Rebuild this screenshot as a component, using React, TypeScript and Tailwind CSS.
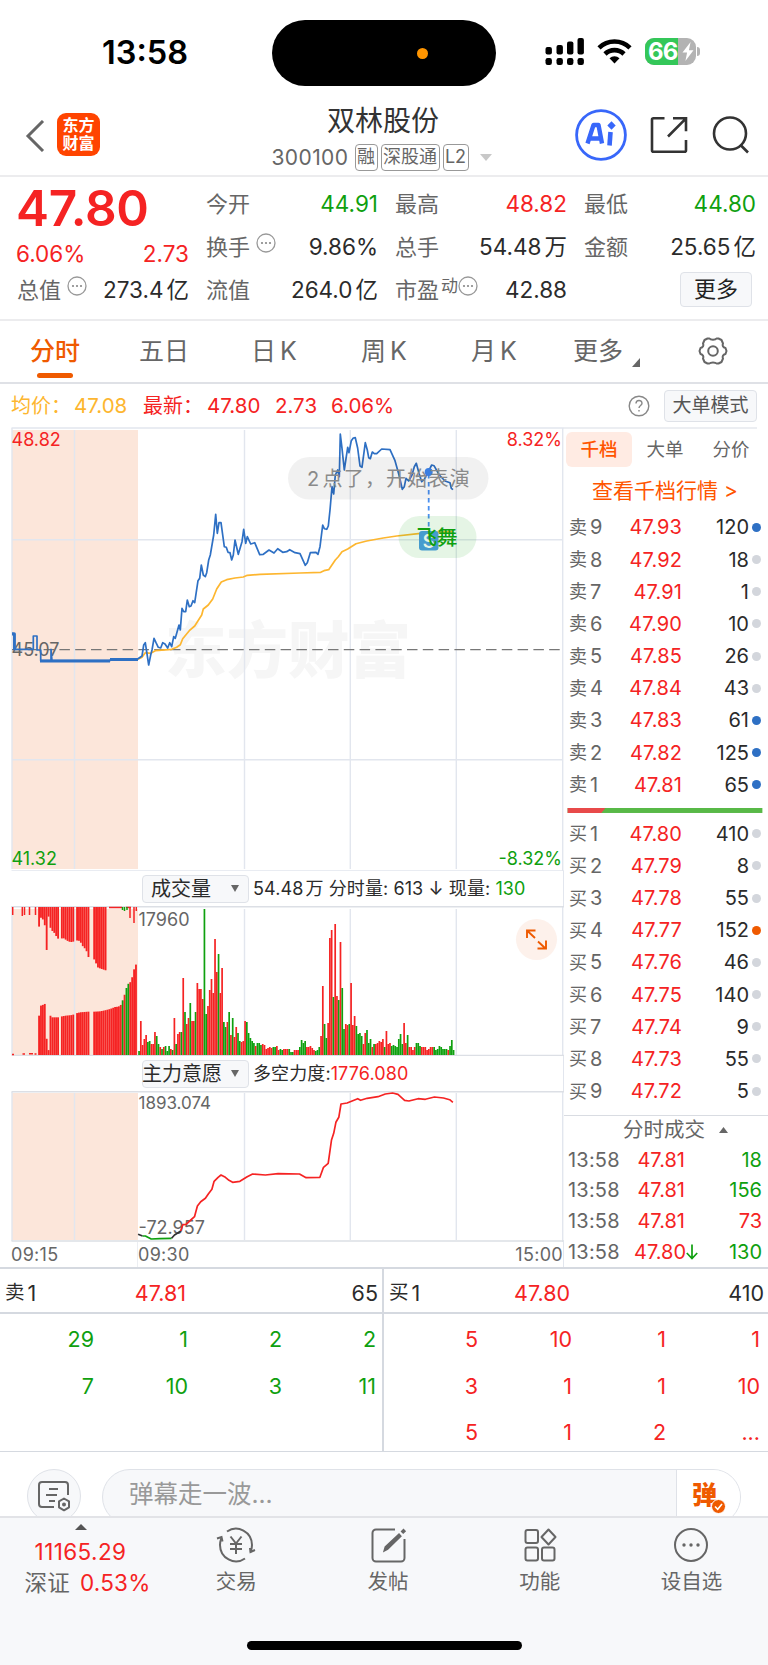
import type { ReactNode } from "react";
import clsx from "clsx";

type Point = [number, number];
type Tone = "red" | "green" | "dark";

const toneClass: Record<Tone, string> = {
  red: "text-[#f52323]",
  green: "text-[#0fa00f]",
  dark: "text-[#2b2b2b]",
};

// builds a polyline string from points plotted at 3x
const plot = (pts: Point[], ox: number, oy: number, sx = 3) =>
  pts.map(([x, y]) => `${(ox + x / sx).toFixed(1)},${(oy + y / 3).toFixed(1)}`).join(" ");

const priceMorning: Point[] = [
  [36, 640], [42, 640], [42, 688], [100, 688], [100, 648], [111, 648], [111, 690], [122, 690], [122, 722],
  [153, 722], [153, 688], [156, 722], [330, 722], [332, 718], [400, 718], [414, 716], [426, 708], [431, 675],
  [436, 668], [446, 735], [452, 705], [456, 690], [462, 655], [468, 668], [475, 682], [482, 684], [488, 668],
  [495, 672], [503, 684], [509, 668], [515, 680], [521, 650], [526, 655], [537, 615], [541, 630], [546, 565],
  [551, 575], [557, 575], [562, 540], [568, 560], [573, 558], [579, 542], [584, 548], [594, 482], [599, 475],
  [604, 435], [610, 465], [616, 470], [620, 458], [626, 420], [631, 405], [641, 345], [647, 283], [652, 340],
  [657, 308], [663, 308], [673, 380], [679, 382], [684, 397], [690, 398], [695, 420], [700, 405], [705, 360],
  [715, 403], [726, 365], [731, 328], [737, 370], [742, 350], [752, 372], [764, 368], [779, 404], [790, 403],
  [807, 390], [822, 399], [833, 386], [848, 397], [860, 395], [869, 389], [885, 398], [900, 401],
];

const priceAfternoon: Point[] = [
  [106, 436], [112, 428], [121, 398], [138, 397], [144, 403], [150, 380], [158, 315], [163, 326], [170, 328],
  [175, 318], [180, 270], [186, 200], [191, 222], [196, 165], [203, 150], [208, 170], [211, 42], [216, 85],
  [223, 150], [233, 82], [237, 98], [244, 62], [250, 54], [256, 53], [263, 85], [270, 138], [276, 142],
  [286, 68], [292, 90], [296, 113], [301, 116], [307, 96], [313, 101], [320, 101], [335, 87], [360, 89],
  [375, 122], [387, 165], [397, 208], [403, 200], [408, 175], [416, 183], [426, 165], [433, 140], [439, 130],
  [447, 160], [455, 185], [463, 178], [475, 155], [485, 135], [492, 137], [508, 165], [525, 183], [540, 188],
  [544, 205], [549, 209],
];

const avgMorning: Point[] = [
  [414, 718], [426, 712], [436, 698], [452, 700], [466, 692], [515, 688], [530, 682], [541, 674], [548, 656],
  [568, 632], [584, 618], [605, 585], [610, 567], [625, 555], [638, 537], [650, 507], [664, 486], [680, 479],
  [705, 474], [730, 471], [742, 466], [780, 463], [900, 459],
];

const avgAfternoon: Point[] = [
  [152, 457], [162, 452], [176, 449], [196, 420], [205, 410], [216, 395], [233, 387], [258, 371], [290, 363],
  [340, 354], [380, 348], [445, 341], [480, 338], [549, 335],
];

const force: Point[] = [
  [497, 513], [503, 494], [512, 493], [525, 480], [535, 470], [543, 438], [552, 425], [565, 415], [573, 402],
  [583, 388], [589, 364], [600, 352], [608, 345], [620, 352], [630, 361], [640, 367], [660, 364], [680, 350],
  [695, 342], [730, 345], [765, 341], [824, 342], [842, 353], [880, 352], [890, 322], [903, 310], [912, 240],
  [918, 220], [924, 187], [932, 172], [938, 132], [955, 129], [984, 116], [992, 121], [1010, 115], [1040, 110],
  [1060, 102], [1080, 99], [1095, 103], [1113, 121], [1125, 123], [1150, 116], [1170, 118], [1195, 111],
  [1220, 114], [1237, 119], [1246, 127],
];

// one entry per minute, "g" marks a falling minute
const volumes = (
  "4g 34 10 16 20 13g 14g 11 11 23 19g 11g 8 6g 8 9g 4g 9g 6 5g 37 11g 21 23 23g 77 43g 31 37 52g 34 34 43g 72 66 66 56 146g 41g 49 " +
  "65 76 62 116 83 101g 62 87 33g 28g 33 43g 20 37g 18 28 22g 14g 13 14 34 33g 22g 17g 14g 12g 9 12g 12g 10g 11 10 6 7 8 7 8g 8g 9 5 " +
  "6g 5g 6 6 6 6g 3g 3g 5 5 5 8g 15g 12g 14g 8 8 9 7 5 4g 5g 8g 19 69 31g 17g 32 117 125 58g 131 59 55g 113 67g 26g 31 30 " +
  "31g 72 30 39 29g 21g 22g 19g 11 22 25g 12g 16g 8 11g 11 12 14 13 16 8g 24 11 12 9g 10g 9g 8g 16g 21g 11g 32 12 20g 8 8 5 8 " +
  "12g 12g 9g 8 8 8 5 6 8 8 8g 5g 6g 9g 8g 6g 6g 6g 5 9g 15g 5g"
).split(" ");

const auctionTop: Point[] = [
  [116, 66], [121, 30], [127, 38], [133, 35], [139, 143], [146, 20], [150, 60], [155, 70], [160, 75], [165, 80],
  [172, 95], [191, 94], [203, 102], [210, 105], [217, 105], [228, 100], [240, 102], [246, 115], [252, 122],
  [258, 128], [265, 150], [284, 158], [289, 172], [294, 182], [302, 185], [317, 190], [322, 207],
];

const auctionBottom: Point[] = [
  [116, 112], [122, 148], [128, 150], [134, 155], [140, 45], [146, 12], [151, 118], [156, 113], [176, 113],
  [186, 116], [197, 118], [217, 120], [228, 125], [240, 128], [265, 130], [284, 130], [300, 131], [315, 134],
  [330, 138], [345, 144], [355, 145], [362, 150], [367, 162], [372, 175], [378, 198], [384, 213], [390, 217],
  [396, 232], [402, 257], [408, 272],
];

const heightAt = (pts: Point[], x: number) => {
  const i = pts.findIndex(([px]) => px >= x);
  if (i === -1) return 0;
  if (i === 0 || pts[i][0] === x) return pts[i][1];
  const [x0, y0] = pts[i - 1];
  const [x1, y1] = pts[i];
  return y0 + ((y1 - y0) * (x - x0)) / (x1 - x0);
};

const auctionX = Array.from({ length: 52 }, (_, i) => 117 + i * 5.7).filter(
  (x) => !(x > 178 && x < 184) && !(x > 220 && x < 226) && !(x > 267 && x < 281)
);

const sells = [
  ["9", "47.93", "120", "bg-[#2e70c4]"],
  ["8", "47.92", "18", "bg-[#d3d6dc]"],
  ["7", "47.91", "1", "bg-[#d3d6dc]"],
  ["6", "47.90", "10", "bg-[#d3d6dc]"],
  ["5", "47.85", "26", "bg-[#d3d6dc]"],
  ["4", "47.84", "43", "bg-[#d3d6dc]"],
  ["3", "47.83", "61", "bg-[#2e70c4]"],
  ["2", "47.82", "125", "bg-[#2e70c4]"],
  ["1", "47.81", "65", "bg-[#2e70c4]"],
];

const buys = [
  ["1", "47.80", "410", "bg-[#d3d6dc]"],
  ["2", "47.79", "8", "bg-[#d3d6dc]"],
  ["3", "47.78", "55", "bg-[#d3d6dc]"],
  ["4", "47.77", "152", "bg-[#ef5a00]"],
  ["5", "47.76", "46", "bg-[#d3d6dc]"],
  ["6", "47.75", "140", "bg-[#d3d6dc]"],
  ["7", "47.74", "9", "bg-[#d3d6dc]"],
  ["8", "47.73", "55", "bg-[#d3d6dc]"],
  ["9", "47.72", "5", "bg-[#d3d6dc]"],
];

const trades: { price: string; qty: string; tone: Tone; down?: boolean }[] = [
  { price: "47.81", qty: "18", tone: "green" },
  { price: "47.81", qty: "156", tone: "green" },
  { price: "47.81", qty: "73", tone: "red" },
  { price: "47.80", qty: "130", tone: "green", down: true },
];

const MoreDots = () => (
  <svg className="w-5 h-5 shrink-0" viewBox="0 0 20 20" fill="none">
    <circle cx="10" cy="10" r="9" stroke="#999" strokeWidth="1.3" />
    <g fill="#888">
      <circle cx="6" cy="10" r="1.1" />
      <circle cx="10" cy="10" r="1.1" />
      <circle cx="14" cy="10" r="1.1" />
    </g>
  </svg>
);

function StatusBar() {
  return (
    <div className="h-[101px] flex relative">
      <div className="ml-[102px] mt-[33px] w-[170px] text-[32.5px] leading-[40px] font-semibold text-black">
        13:58
      </div>
      <div className="mt-5 w-56 h-[66px] rounded-full bg-black flex items-center">
        <span className="ml-[145px] size-[11px] rounded-full bg-[#ff9500]" />
      </div>
      <svg className="ml-[49px] mt-[38px] w-10 h-7" viewBox="0 0 40 28">
        <rect x="0.5" y="9" width="6.4" height="7.5" rx="2" />
        <rect x="11.5" y="7" width="6.4" height="9.5" rx="2" />
        <rect x="22" y="3.5" width="6.4" height="13" rx="2" />
        <rect x="32.5" y="0" width="6.4" height="16.5" rx="2" />
        <rect x="0.5" y="20" width="6.4" height="7" rx="2.2" />
        <rect x="11.5" y="20" width="6.4" height="7" rx="2.2" />
        <rect x="22" y="20" width="6.4" height="7" rx="2.2" />
        <rect x="32.5" y="20" width="6.4" height="7" rx="2.2" />
      </svg>
      <svg className="ml-3 mt-[38px] w-[35px] h-[26px]" viewBox="0 0 35 26" fill="none" stroke="#000" strokeWidth="4.6">
        <path d="M2 9.8a22.3 22.3 0 0 1 31 0" />
        <path d="M8 16a13.6 13.6 0 0 1 19 0" />
        <path d="M17.5 25.5l-5-5.2a7.2 7.2 0 0 1 10 0z" fill="#000" stroke="none" />
      </svg>
      <div className="ml-[13px] mt-[38px] flex items-center h-[27px]">
        <div className="relative w-[51px] h-[27px] rounded-[9px] overflow-hidden bg-[#b3b3b3]">
          <div className="w-[33px] h-full bg-[#34c759]" />
          <span className="absolute left-[3px] top-0 text-[24px] leading-[27px] font-bold text-white tracking-[-0.8px]">66</span>
          <svg className="absolute right-[2px] top-[4px] w-3 h-[19px]" viewBox="0 0 12 19" fill="#fff">
            <path d="M8.6 0L0.5 10.6h4.6L3.4 19l8.1-10.7H6.9z" />
          </svg>
        </div>
        <div className="ml-px w-[3px] h-[9px] rounded-r-full bg-[#b3b3b3]" />
      </div>
    </div>
  );
}

function Header() {
  return (
    <header className="h-[76px] flex border-b-2 border-[#ececee]">
      <svg className="ml-[25px] mt-[19px] w-5 h-8" viewBox="0 0 20 32" fill="none" stroke="#666" strokeWidth="3">
        <path d="M18 1L3 16l15 15" />
      </svg>
      <div className="ml-3 mt-[12px] w-[43px] h-[43px] rounded-[9px] bg-[#ff4400] text-white font-semibold text-[16px] leading-[18px] text-center pt-[3px]">
        <div>东方</div>
        <div>财富</div>
      </div>
      <div className="ml-[150px] w-[266px] flex flex-col items-center">
        <h1 className="text-[28px] leading-[40px] text-[#333]">双林股份</h1>
        <div className="flex items-center h-7 mt-[3px] -ml-[3px] text-[#666]">
          <span className="text-[21px] leading-7 w-[83px] tracking-[0.4px]">300100</span>
          <span className="border-[1.5px] border-[#999] rounded-[4px] h-[27px] w-[23px] text-center text-[18px] leading-[24px]">融</span>
          <span className="ml-[3px] border-[1.5px] border-[#999] rounded-[4px] h-[27px] w-[59px] text-center text-[18px] leading-[24px]">深股通</span>
          <span className="ml-[3px] border-[1.5px] border-[#999] rounded-[4px] h-[27px] w-[26px] text-center text-[18px] leading-[24px]">L2</span>
          <svg className="ml-[11px] w-3 h-[7px]" viewBox="0 0 12 7" fill="#c8c8c8">
            <path d="M0 0h12L6 7z" />
          </svg>
        </div>
      </div>
      <div className="ml-[59px] flex">
        <svg className="mt-[8px] w-[52px] h-[52px] shrink-0" viewBox="0 0 52 52" fill="none">
          <circle cx="26" cy="26" r="24.4" stroke="#3867fa" strokeWidth="2.8" />
          <path d="M12.5 34.5l6-18.5h5l3.5 18.5M14.5 29.5h11" stroke="#3867fa" strokeWidth="4.4" strokeLinejoin="round" />
          <path d="M35.5 23l-1 13.5" stroke="#3867fa" strokeWidth="4.6" />
          <path d="M36.5 12.3l4.2 4.2-4.2 4.2-4.2-4.2z" fill="#3867fa" />
        </svg>
        <svg className="ml-[23px] mt-[15px] w-[38px] h-[38px] shrink-0" viewBox="0 0 38 38" fill="none" stroke="#333" strokeWidth="2.6">
          <path d="M14.500 2.300H3.500a1.500 1.500 0 0 0-1.500 1.500v30.500a1.500 1.500 0 0 0 1.500 1.500h31a1.500 1.500 0 0 0 1.500-1.500V24" />
          <path d="M23 2.300h13v13M36 2.300L18 20.500" />
        </svg>
        <svg className="ml-[23px] mt-[14px] w-10 h-10 shrink-0" viewBox="0 0 40 40" fill="none" stroke="#333" strokeWidth="2.6">
          <circle cx="19" cy="18.500" r="16" />
          <path d="M29.500 30l7.500 7.500" />
        </svg>
      </div>
    </header>
  );
}

function Quote({ label, value, unit, tone = "dark", extra }: { label: string; value: string; unit?: string; tone?: Tone; extra?: ReactNode }) {
  return (
    <div className="flex items-center justify-between h-[43px]">
      <span className="flex items-center text-[22px] leading-[30px] text-[#666]">
        {label}
        {extra}
      </span>
      <span className={clsx("text-[22.5px] leading-[30px] flex", toneClass[tone])}>
        {value}
        {unit && <span className="ml-[3px]">{unit}</span>}
      </span>
    </div>
  );
}

function QuotePanel() {
  return (
    <section className="h-[145px] flex gap-[17px] pl-[17px] pr-3 border-b-2 border-[#ececee]">
      <div className="w-[172px]">
        <div className="text-[49.5px] leading-[60px] font-semibold tracking-[-0.3px] text-[#f52323] mt-[1px] -ml-px">47.80</div>
        <div className="mt-px flex justify-between text-[22.5px] leading-[30px] text-[#f52323]">
          <span className="-ml-px">6.06%</span>
          <span>2.73</span>
        </div>
        <Quote label="总值" value="273.4" unit="亿" extra={<span className="ml-[6px] -mt-2"><MoreDots /></span>} />
      </div>
      <div className="w-[172px] mt-[6px]">
        <Quote label="今开" value="44.91" tone="green" />
        <Quote label="换手" value="9.86%" extra={<span className="ml-[6px] -mt-2"><MoreDots /></span>} />
        <Quote label="流值" value="264.0" unit="亿" />
      </div>
      <div className="w-[172px] mt-[6px]">
        <Quote label="最高" value="48.82" tone="red" />
        <Quote label="总手" value="54.48" unit="万" />
        <Quote
          label="市盈"
          value="42.88"
          extra={
            <span className="flex items-center -mt-2">
              <span className="text-[17px] leading-5 ml-[2px]">动</span>
              <MoreDots />
            </span>
          }
        />
      </div>
      <div className="w-[172px] mt-[6px]">
        <Quote label="最低" value="44.80" tone="green" />
        <Quote label="金额" value="25.65" unit="亿" />
        <button className="block ml-auto mr-1 mt-[3px] w-[72px] h-[35px] rounded-[4px] border-[1.5px] border-[#dfe2e8] bg-[#f7f8fa] text-[22px] leading-[31px] text-[#222]">
          更多
        </button>
      </div>
    </section>
  );
}

function Tabs() {
  const tabs = [
    { name: "五日", width: "w-[110px]" },
    { name: "日K", width: "w-[110px]" },
    { name: "周K", width: "w-[110px]" },
    { name: "月K", width: "w-[110px]" },
  ];
  return (
    <nav className="h-[63px] flex text-[25px] leading-[61px] text-[#666] border-b-2 border-[#dfe1e6]">
      <div className="w-[110px] flex flex-col items-center text-[#ef5a00] font-medium">
        <span className="h-[52px]">分时</span>
        <span className="w-9 h-[5px] rounded-full bg-[#ef5a00]" />
      </div>
      {tabs.map((t) => (
        <div key={t.name} className={clsx("text-center -ml-px mr-px", t.width)}>
          {t.name.charAt(0)}
          <span className={t.name.endsWith("K") ? "ml-1" : ""}>{t.name.charAt(1)}</span>
        </div>
      ))}
      <div className="w-[110px] pl-[23px] flex">
        更多
        <svg className="ml-[9px] mt-[37px] w-2 h-[9px]" viewBox="0 0 8 9" fill="#666">
          <path d="M8 0v9H0z" />
        </svg>
      </div>
      <svg className="ml-[38px] mt-[16px] w-[30px] h-[28px]" viewBox="0 0 30 28" fill="none" stroke="#666" strokeWidth="2">
        <path
          d="M9.500 1.500h2c1 1.500 6 1.500 7 0h2l3 1.500 1.500 3.500c-1 2 0 4 2.500 4.500l1 3-1 3c-2.500.5-3.500 2.500-2.500 4.500L23.500 25l-3 1.500h-2c-1-1.500-6-1.500-7 0h-2l-3-1.500L5 21.500c1-2 0-4-2.500-4.500l-1-3 1-3C5 10.500 6 8.500 5 6.500L6.500 3z"
          strokeLinejoin="round"
        />
        <circle cx="15" cy="14" r="4.800" />
      </svg>
    </nav>
  );
}

function InfoRow() {
  return (
    <div className="h-[43px] flex items-center pl-[11px] pr-[11px] text-[20.5px] text-[#f52323]">
      <span className="text-[#fdb62f] w-[63px] whitespace-nowrap text-[20px]">均价：</span>
      <span className="text-[#fdb62f] w-[69px]">47.08</span>
      <span className="w-[64px] whitespace-nowrap text-[20px]">最新：</span>
      <span className="w-[68px]">47.80</span>
      <span className="w-[56px]">2.73</span>
      <span>6.06%</span>
      <svg className="ml-auto w-[22px] h-[22px]" viewBox="0 0 22 22" fill="none" stroke="#888" strokeWidth="1.4">
        <circle cx="11" cy="11" r="9.800" />
        <path d="M8 8.500c0-4 6-4 6-.3 0 2.300-3 2.300-3 4.800M11 15v1.600" />
      </svg>
      <button className="ml-[14px] w-[93px] h-8 rounded-[4px] border-[1.5px] border-[#dfe2e8] bg-[#f7f8fa] text-[19px] leading-[28px] text-[#555]">
        大单模式
      </button>
    </div>
  );
}

function PriceChart() {
  return (
    <svg className="block w-[564px] h-[444px]" viewBox="0 427 564 444">
      <rect x="12" y="430" width="126" height="439" fill="#fce6da" />
      <text x="165" y="673" fontSize="61.500" fontWeight="900" fill="#f6f6f6">东方财富</text>
      <g stroke="#e2e6ee" strokeWidth="1.4">
        <path d="M11.500 428H564M11.500 871H564" />
        <path d="M12 428V869M74.500 430V869M244.500 430V869M350.300 430V869M456.300 430V869M562.700 428V871" />
        <path d="M12 539.700H563M12 759.700H563" />
      </g>
      <path d="M12 649.700H563" stroke="#777" strokeWidth="1.300" strokeDasharray="10.500 5.300" />
      <g fontSize="18">
        <text x="11.500" y="446" fill="#f52323">48.82</text>
        <text x="562" y="446" textAnchor="end" fill="#f52323">8.32%</text>
        <text x="11.500" y="865" fill="#0fa00f">41.32</text>
        <text x="562" y="865" textAnchor="end" fill="#0fa00f">-8.32%</text>
        <text x="11.500" y="655.500" fill="#666">45.07</text>
      </g>
      <g fill="none" strokeLinejoin="round">
        <polyline points={`${plot(avgMorning, 0, 420)} ${plot(avgAfternoon, 270, 420)}`} stroke="#fdb62f" strokeWidth="1.700" />
        <polyline points={`${plot(priceMorning, 0, 420)} ${plot(priceAfternoon, 270, 420)}`} stroke="#2e70c4" strokeWidth="1.700" />
        <path d="M12 634h2.500v16M40 661H110M110 659.500H138" stroke="#2e70c4" strokeWidth="2.800" />
      </g>
      {/* trade marker */}
      <path d="M428.700 474V530" stroke="#4a90f0" strokeWidth="1.800" strokeDasharray="4.500 3.500" />
      <circle cx="428.700" cy="472" r="4" fill="#3f86ee" />
      <rect x="419" y="531" width="19.500" height="19.500" rx="3" fill="#4d9be6" />
      <text x="428.700" y="547.500" textAnchor="middle" fontSize="18" fontWeight="600" fill="#fff">S</text>
      {/* floating comments */}
      <rect x="288" y="457" width="200.500" height="42.500" rx="21.250" fill="#000" fillOpacity="0.055" />
      <text x="307" y="486" fontSize="20" fill="#8a8a8a">2</text>
      <text x="322.500" y="486" fontSize="20" fill="#8a8a8a" letterSpacing="1.200">点了，开始表演</text>
      <rect x="398.500" y="516" width="78" height="42" rx="21" fill="#0fa00f" fillOpacity="0.11" />
      <text x="416.500" y="545" fontSize="20.500" fontWeight="500" fill="#0fa00f">飞舞</text>
    </svg>
  );
}

function VolumeChart() {
  return (
    <svg className="block w-[564px] h-[150px]" viewBox="0 906 564 150">
      <rect x="12" y="909" width="126" height="146" fill="#fce6da" />
      <g stroke="#e2e6ee" strokeWidth="1.400">
        <path d="M12 906V1055M74.500 909V1055M244.500 909V1055M350.300 909V1055M456.300 909V1055M562.700 906V1056" />
        <path d="M11.500 906.700H564M11.500 1055.500H564" stroke="#dcdfe5" />
      </g>
      {auctionX.map((x) => {
        const top = x < 325 ? heightAt(auctionTop, x) / 3 : 0;
        const green = (x > 364 && x < 370) || (x > 375 && x < 388);
        return (
          <g key={x} fill={green ? "#0fa00f" : "#f52323"}>
            <rect x={x / 3 - 0.85} y="907" width="1.850" height={top} />
            <rect x={x / 3 - 0.85} y={1055 - heightAt(auctionBottom, x) / 3} width="1.850" height={heightAt(auctionBottom, x) / 3} />
          </g>
        );
      })}
      <g stroke="#f52323" strokeWidth="1.500">
        <path d="M12.700 907v8M22.300 907v9M24.500 907v8M29.500 907v8M35.500 907v8M130 907v11M134 907v16M136.300 907v4" />
        <path d="M109 907.500h13M126 907.500h5" />
        <path d="M12 1054.500h2M22.500 1054h2.500M29 1053.800h4M34.500 1054h2" />
        <path d="M122.500 907v3M124.500 907v4M127 907v3" stroke="#0fa00f" />
      </g>
      {volumes.map((v, i) => {
        const h = parseInt(v, 10);
        return (
          <rect key={i} x={138.200 + i * 1.767} y={1055 - h} width="1.700" height={h} fill={v.endsWith("g") ? "#0fa00f" : "#f52323"} />
        );
      })}
      <text x="138.500" y="926" fontSize="18" fill="#666">17960</text>
      <circle cx="536.500" cy="939.500" r="20.500" fill="#fdf1eb" />
      <g fill="none" stroke="#ef5a00" strokeWidth="1.900">
        <path d="M527 938V930.500h8.500M527.500 931l7.500 7M538 941.500l7.500 7M546 940.500V948.500h-8.500" />
      </g>
    </svg>
  );
}

function ForceChart() {
  return (
    <svg className="block w-[564px] h-[151px]" viewBox="0 1091 564 151">
      <rect x="12" y="1093" width="126" height="147" fill="#fce6da" />
      <g stroke="#e2e6ee" strokeWidth="1.400">
        <path d="M12 1092V1241M74.500 1093V1240M244.500 1093V1240M350.300 1093V1240M456.300 1093V1240M562.700 1091V1242" />
        <path d="M11.500 1091.700H564M11.500 1241H564" stroke="#dcdfe5" />
      </g>
      <text x="138.500" y="1109" fontSize="17" fill="#666">1893.074</text>
      <text x="138.500" y="1234" fontSize="18" fill="#666">-72.957</text>
      <g fill="none" strokeLinejoin="round" strokeWidth="1.700">
        <polyline points={plot([[380, 523], [392, 528]], 0, 1060, 2.751)} stroke="#333" />
        <polyline points={plot([[392, 528], [400, 528], [416, 537], [440, 536], [472, 535]], 0, 1060, 2.751)} stroke="#0fa00f" />
        <polyline points={plot([[472, 535], [480, 525], [490, 518], [497, 513]], 0, 1060, 2.751)} stroke="#333" />
        <polyline points={plot(force, 0, 1060, 2.751)} stroke="#f52323" />
      </g>
    </svg>
  );
}

function IndicatorSelect({ name }: { name: string }) {
  return (
    <button className="ml-[142px] w-[107px] h-[28px] shrink-0 flex items-center justify-between rounded-[4px] border-[1.5px] border-[#dfe2e8] bg-[#f7f8fa] text-[20px] leading-6 text-[#2b2b2b]">
      <span className={name.length === 4 ? "-ml-px" : "ml-2"}>{name}</span>
      <svg className="mr-[9px] w-2 h-[7px]" viewBox="0 0 8 7" fill="#666">
        <path d="M0 0h8L4 7z" />
      </svg>
    </button>
  );
}

function Charts() {
  return (
    <div className="w-[564px] flex flex-col">
      <PriceChart />
      <div className="h-[35px] flex items-center text-[18px] text-[#2b2b2b] border-r-[1.5px] border-[#e2e6ee]">
        <IndicatorSelect name="成交量" />
        <span className="ml-1 whitespace-nowrap tracking-[0.1px]">
          54.48<span className="ml-[2px]">万</span> 分时量: 613 ↓ 现量: <span className="text-[#0fa00f]">130</span>
        </span>
      </div>
      <VolumeChart />
      <div className="h-[35px] flex items-center text-[18px] text-[#2b2b2b] border-r-[1.5px] border-[#e2e6ee]">
        <IndicatorSelect name="主力意愿" />
        <span className="ml-1 whitespace-nowrap tracking-[0.1px]">
          多空力度:<span className="text-[#f52323]">1776.080</span>
        </span>
      </div>
      <ForceChart />
      <div className="h-[25px] flex text-[18px] leading-[26px] tracking-[0.3px] text-[#666] border-r-[1.5px] border-[#e2e6ee]">
        <span className="pl-[11px] w-[138px] border-r border-[#eceef2]">09:15</span>
        <span>09:30</span>
        <span className="ml-auto">15:00</span>
      </div>
    </div>
  );
}

function BookRow({ side, row }: { side: string; row: string[] }) {
  const [level, price, qty, dot] = row;
  return (
    <div className="h-[32.17px] flex items-center text-[20px]">
      <span className="w-[42px] text-[#666] flex items-center">
        <span className="text-[18px] mr-[3px]">{side}</span>
        {level}
      </span>
      <span className="w-[71px] text-right text-[#f52323] tracking-[0.1px]">{price}</span>
      <span className="w-[67px] text-right text-[#2b2b2b]">{qty}</span>
      <span className={clsx("ml-[3px] size-[9px] rounded-full", dot)} />
    </div>
  );
}

function OrderBook() {
  return (
    <aside className="flex-1 flex flex-col">
      <div className="mr-[11px] border-t-2 border-[#eceef2]" />
      <div className="mt-[3px] ml-[2px] flex text-[18.500px] leading-[35px] text-center text-[#666]">
        <span className="w-[66px] rounded-[6px] bg-[#ffebe3] text-[#ff5500] font-medium">千档</span>
        <span className="w-[66px]">大单</span>
        <span className="w-[66px]">分价</span>
      </div>
      <div className="mt-[8px] ml-[28px] text-[21px] leading-8 text-[#ff5500] whitespace-nowrap">查看千档行情 &gt;</div>
      <div className="mt-[4px] pl-[5px]">
        {sells.map((row) => (
          <BookRow key={row[0]} side="卖" row={row} />
        ))}
      </div>
      <svg className="block ml-[3px] mt-[7px] w-[196px] h-[5px]" viewBox="0 0 196 5">
        <rect width="196" height="5" fill="#58b947" />
        <path d="M0 0h38l-4 5H0z" fill="#e84a4a" />
      </svg>
      <div className="mt-[5px] pl-[5px]">
        {buys.map((row) => (
          <BookRow key={row[0]} side="买" row={row} />
        ))}
      </div>
      <div className="mt-[8px] h-[29px] border-t-[1.5px] border-[#d9dce2] flex items-center text-[20.500px] text-[#666]">
        <span className="ml-[59px]">分时成交</span>
        <svg className="ml-[14px] w-[9px] h-[6px]" viewBox="0 0 9 6" fill="#666">
          <path d="M0 6h9L4.500 0z" />
        </svg>
      </div>
      {trades.map((t, i) => (
        <div key={i} className="h-[31px] flex items-center pl-1 text-[20px]">
          <span className="w-[66px] text-[#666] tracking-[0.2px]">13:58</span>
          <span className="w-[51px] text-right text-[#f52323]">{t.price}</span>
          <span className="w-[16px]">
            {t.down && (
              <svg className="w-3 h-4 ml-px" viewBox="0 0 12 16" fill="none" stroke="#0fa00f" strokeWidth="1.700">
                <path d="M6 0.500v14M0.800 9L6 14.500 11.200 9" />
              </svg>
            )}
          </span>
          <span className={clsx("w-[61px] text-right", toneClass[t.tone])}>{t.qty}</span>
        </div>
      ))}
    </aside>
  );
}

function QueueSide({ label, price, qty, rows, tone }: { label: string; price: string; qty: string; rows: string[][]; tone: Tone }) {
  return (
    <div className={clsx("w-1/2", label === "卖" && "border-r-2 border-[#d5d9e0]")}>
      <div className="h-[45px] flex items-center border-b-2 border-[#d5d9e0] pt-[4px] pl-[5px] pr-[4px] text-[21.5px] text-[#2b2b2b]">
        <span className="w-[81px] flex items-center">
          <span className="text-[19.5px] mr-[3px]">{label}</span>1
        </span>
        <span className="w-[100px] text-right text-[#f52323]">{price}</span>
        <span className="ml-auto">{qty}</span>
      </div>
      <div className="pt-[2px]">
        {rows.map((row, i) => (
          <div key={i} className={clsx("h-[46.300px] flex items-center text-[21.5px]", toneClass[tone])}>
            {row.map((n, j) => (
              <span key={j} className="w-[94px] text-right">{n}</span>
            ))}
          </div>
        ))}
      </div>
    </div>
  );
}

function CommentBar() {
  return (
    <div className="h-[64px] overflow-hidden flex pt-[17px] pl-[27px]">
      <div className="size-[54px] rounded-full border-[1.5px] border-[#dfe2e8] bg-[#f7f8fa] flex items-center justify-center shrink-0">
        <svg className="w-[34px] h-[32px]" viewBox="0 0 34 32" fill="none" stroke="#666" strokeWidth="2">
          <path d="M17 27H5a3 3 0 0 1-3-3V5a3 3 0 0 1 3-3h23a3 3 0 0 1 3 3v10" />
          <path d="M12 9h9M9 15h11M12 21h6" />
          <path d="M27 18.500l5 2.800v6l-5 3-5-3v-6z" strokeLinejoin="round" />
          <circle cx="27" cy="24.500" r="1" />
        </svg>
      </div>
      <div className="ml-[21px] w-[639px] h-[56px] shrink-0 rounded-full border-[1.5px] border-[#dfe2e8] bg-[#f7f8fa] overflow-hidden flex">
        <span className="pl-[26px] w-[574px] text-[24.5px] leading-[48px] text-[#999] border-r-[1.5px] border-[#dfe2e8]">弹幕走一波...</span>
        <span className="flex-1 bg-white relative">
          <span className="absolute left-[15px] top-[7px] text-[25px] leading-[36px] font-black text-[#ef5a00]">弹</span>
          <svg className="absolute left-[34px] top-[29px] size-[15px]" viewBox="0 0 15 15">
            <circle cx="7.500" cy="7.500" r="7" fill="#ef5a00" stroke="#fff" />
            <path d="M4 7.500l2.700 2.700L11 5" fill="none" stroke="#fff" strokeWidth="1.600" />
          </svg>
        </span>
      </div>
    </div>
  );
}

const navItems: { name: string; icon: ReactNode }[] = [
  {
    name: "交易",
    icon: (
      <>
        <path d="M11 4.500A16 16.500 0 0 1 36 18c0 2.500-.5 4.500-1.300 7M29 31.500A16 16.500 0 0 1 4 18c0-2.500.5-4.500 1.300-7" />
        <path d="M39 23l-4.500 2-.5-4M1 11.500L5.500 10l1 4.500" />
        <path d="M14.500 9.500l5.500 7 5.500-7M20 16.500v10.500M14 17h12M14 22h12" />
      </>
    ),
  },
  {
    name: "发帖",
    icon: (
      <>
        <path d="M27 2.500H8a3.500 3.500 0 0 0-3.500 3.500v25A3.500 3.500 0 0 0 8 34.500h25a3.500 3.500 0 0 0 3.500-3.500V12" />
        <path d="M16.500 23.500l1-3.500L31 7.500l1.500 1.700L19.500 22z M34 4.500l1.500-1.500 1.200 1.200-1.500 1.500z" fill="#666" />
      </>
    ),
  },
  {
    name: "功能",
    icon: (
      <>
        <rect x="5.500" y="3" width="12.500" height="13" rx="2" />
        <rect x="5.500" y="20.500" width="12.500" height="13" rx="2" />
        <rect x="22" y="20.500" width="12.500" height="13" rx="2" />
        <path d="M28.500 2.500l7 7.500-7 7.500-7-7.500z" strokeLinejoin="round" />
      </>
    ),
  },
  {
    name: "设自选",
    icon: (
      <>
        <circle cx="20" cy="18" r="16" />
        <g fill="#666" stroke="none">
          <circle cx="13" cy="18" r="1.700" />
          <circle cx="20" cy="18" r="1.700" />
          <circle cx="27" cy="18" r="1.700" />
        </g>
      </>
    ),
  },
];

function BottomNav() {
  return (
    <footer className="h-[149px] bg-[#f7f8fa] border-t-2 border-[#e2e3e7] flex flex-col">
      <div className="h-[100px] flex">
        <div className="w-[161px] shrink-0 flex flex-col items-center text-[22.5px] leading-[31px] text-[#f52323]">
          <svg className="mt-[6px] w-3 h-[6px]" viewBox="0 0 12 6" fill="#555">
            <path d="M0 6h12L6 0z" />
          </svg>
          <span className="mt-[6px] tracking-[0.4px]">11165.29</span>
          <span className="ml-[14px] whitespace-nowrap tracking-[0.2px]">
            <span className="text-[#666] mr-[10px]">深证</span>0.53%
          </span>
        </div>
        {navItems.map((item) => (
          <div key={item.name} className="w-[151.700px] -ml-[0.5px] mr-[0.5px] flex flex-col items-center text-[20.500px] leading-7 text-[#666]">
            <svg className="mt-[9px] w-10 h-9" viewBox="0 0 40 36" fill="none" stroke="#666" strokeWidth="2">
              {item.icon}
            </svg>
            <span className="mt-[5px]">{item.name}</span>
          </div>
        ))}
      </div>
      <div className="mt-[23px] mx-auto w-[275px] h-[9px] rounded-full bg-black" />
    </footer>
  );
}

export default function App() {
  return (
    <div className="w-[768px] h-[1665px] overflow-hidden bg-white flex flex-col font-[Inter,'Noto_Sans_CJK_SC',sans-serif]">
      <StatusBar />
      <Header />
      <QuotePanel />
      <Tabs />
      <InfoRow />
      <div className="flex h-[840px]">
        <Charts />
        <OrderBook />
      </div>
      <div className="h-[185px] flex border-t-2 border-b-[1.5px] border-[#d5d9e0]">
        <QueueSide label="卖" price="47.81" qty="65" tone="green" rows={[["29", "1", "2", "2"], ["7", "10", "3", "11"]]} />
        <QueueSide label="买" price="47.80" qty="410" tone="red" rows={[["5", "10", "1", "1"], ["3", "1", "1", "10"], ["5", "1", "2", "..."]]} />
      </div>
      <CommentBar />
      <BottomNav />
    </div>
  );
}
